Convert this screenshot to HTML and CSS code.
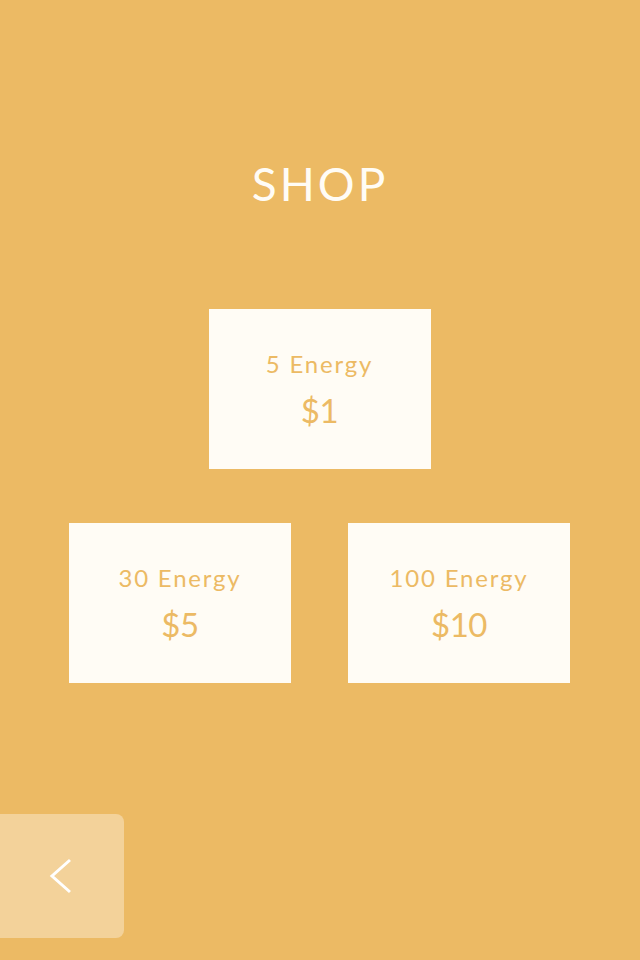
FILE: index.html
```html
<!DOCTYPE html>
<html>
<head>
<meta charset="utf-8">
<link rel="stylesheet" href="styles.css">
</head>
<body>
<main class="screen">
  <h1 class="title">SHOP</h1>
  <section class="shop">
    <div class="row">
      <button class="card"><span class="amount">5 Energy</span><span class="price">$1</span></button>
    </div>
    <div class="row">
      <button class="card"><span class="amount">30 Energy</span><span class="price">$5</span></button>
      <button class="card"><span class="amount">100 Energy</span><span class="price">$10</span></button>
    </div>
  </section>
  <button class="back" aria-label="Back">
    <svg width="28" height="36" viewBox="0 0 28 36"><polyline points="22,2 4,18 22,34" fill="none" stroke="#fff" stroke-width="3"/></svg>
  </button>
</main>
</body>
</html>
```
FILE: styles.css
```css
* { box-sizing: border-box; }
html, body { margin: 0; padding: 0; }
body { background: #ECBA64; font-family: "Lato", "Noto Sans", sans-serif; }
.screen {
  width: 640px;
  height: 960px;
  display: flex;
  flex-direction: column;
  align-items: center;
  padding-top: 152px;
  padding-bottom: 22px;
}
.title {
  margin: 0;
  color: #FFFCF5;
  font-weight: 400;
  font-size: 46px;
  line-height: 64px;
  letter-spacing: 3px;
}
.shop {
  margin-top: 93px;
  width: 640px;
  display: flex;
  flex-direction: column;
  gap: 54px;
}
.row {
  display: flex;
  justify-content: center;
  gap: 57px;
  padding-right: 1px;
}
.card {
  width: 222px;
  height: 160px;
  border: 0;
  background: #FFFCF5;
  color: #ECBA64;
  display: flex;
  flex-direction: column;
  align-items: center;
  justify-content: center;
  font-family: inherit;
  padding: 0;
}
.amount {
  font-size: 24px;
  letter-spacing: 1.8px;
  line-height: 30px;
}
.price {
  font-size: 33px;
  line-height: 40px;
  margin-top: 11px;
  letter-spacing: -0.5px;
}
.back {
  margin-top: auto;
  align-self: flex-start;
  width: 124px;
  height: 124px;
  border: 0;
  border-radius: 0 8px 8px 0;
  background: #F3D29A;
  display: flex;
  align-items: center;
  justify-content: center;
  padding: 0;
}
```
